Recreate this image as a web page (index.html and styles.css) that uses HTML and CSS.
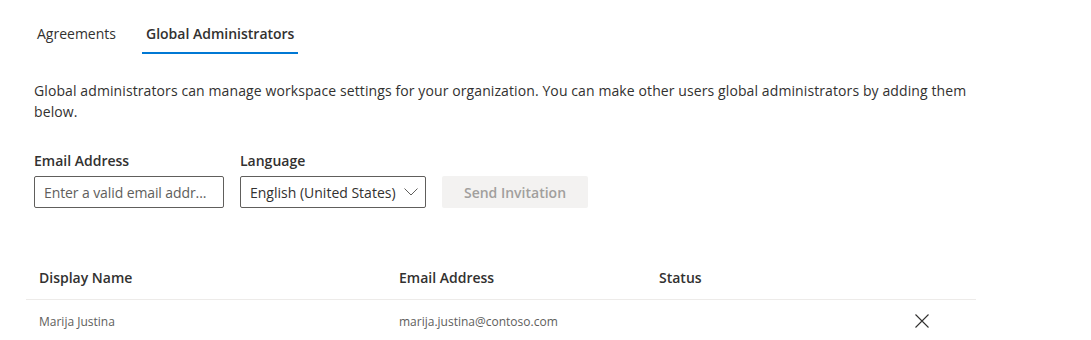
FILE: index.html
```html
<!DOCTYPE html>
<html lang="en">
<head>
    <meta charset="UTF-8">
    <title>Global Administrators</title>
    <link rel="stylesheet" href="styles.css">
</head>
<body>
    <div class="page">
        <div class="tabs">
            <div class="tab">Agreements</div>
            <div class="tab active">Global Administrators</div>
        </div>

        <p class="intro">Global administrators can manage workspace settings for your organization. You can make other users global administrators by adding them below.</p>

        <div class="invite">
            <div class="field">
                <label class="label">Email Address</label>
                <div class="input email">Enter a valid email addr...</div>
            </div>
            <div class="field">
                <label class="label">Language</label>
                <div class="input select">
                    <span>English (United States)</span>
                    <svg class="chevron" width="14" height="8" viewBox="0 0 14 8"><path d="M0.5 0.5 L7 7 L13.5 0.5" fill="none" stroke="#605e5c" stroke-width="1"/></svg>
                </div>
            </div>
            <div class="btn">Send Invitation</div>
        </div>

        <div class="table">
            <div class="row head">
                <div class="col name">Display Name</div>
                <div class="col mail">Email Address</div>
                <div class="col status">Status</div>
                <div class="col action"></div>
            </div>
            <div class="row">
                <div class="col name">Marija Justina</div>
                <div class="col mail">marija.justina@contoso.com</div>
                <div class="col status"></div>
                <div class="col action">
                    <svg width="16" height="16" viewBox="0 0 16 16"><path d="M1.5 1.5 L14.5 14.5 M14.5 1.5 L1.5 14.5" stroke="#323130" stroke-width="1.1" fill="none"/></svg>
                </div>
            </div>
        </div>
    </div>
</body>
</html>
```

FILE: styles.css
```css
body, html {
    margin: 0;
    padding: 0;
    background: #fff;
    color: #323130;
    font-family: "Open Sans", "Noto Sans", sans-serif;
    font-size: 14px;
}

.page {
    padding: 16px 0 0 26px;
    width: 950px;
}

.tabs {
    display: flex;
    gap: 22px;
    padding-left: 7px;
}

.tab {
    font-size: 14px;
    line-height: 20px;
    padding: 8px 4px 8px;
    border-bottom: 2px solid transparent;
}

.tab.active {
    font-weight: 600;
    border-bottom-color: #0078d4;
}

.intro {
    margin: 26px 0 0 8px;
    line-height: 21px;
    letter-spacing: 0.1px;
    width: 940px;
}

.invite {
    display: flex;
    align-items: flex-end;
    gap: 16px;
    margin: 29px 0 0 8px;
}

.field {
    display: flex;
    flex-direction: column;
}

.label {
    font-weight: 600;
    line-height: 20px;
    margin-bottom: 5px;
}

.input {
    height: 30px;
    border: 1px solid #605e5c;
    border-radius: 2px;
    display: flex;
    align-items: center;
    padding: 0 9px;
    box-sizing: content-box;
}

.email {
    width: 170px;
    color: #605e5c;
    letter-spacing: -0.1px;
}

.select {
    justify-content: space-between;
    padding-right: 7px;
    width: 168px;
}

.chevron {
    margin-left: 4px;
}

.btn {
    height: 32px;
    width: 146px;
    background: #f3f2f1;
    color: #a19f9d;
    font-weight: 600;
    display: flex;
    align-items: center;
    justify-content: center;
    border-radius: 2px;
}

.table {
    margin-top: 48px;
    width: 950px;
}

.row {
    display: flex;
    align-items: center;
    height: 42px;
    font-size: 12px;
    color: #605e5c;
}

.row.head {
    font-size: 14px;
    font-weight: 600;
    color: #323130;
    border-bottom: 1px solid #edebe9;
    height: 43px;
}

.col {
    padding-left: 13px;
    box-sizing: border-box;
}

.name { width: 360px; }
.mail { width: 260px; }
.status { width: 240px; }
.action {
    width: 90px;
    display: flex;
    padding-left: 28px;
}
```
